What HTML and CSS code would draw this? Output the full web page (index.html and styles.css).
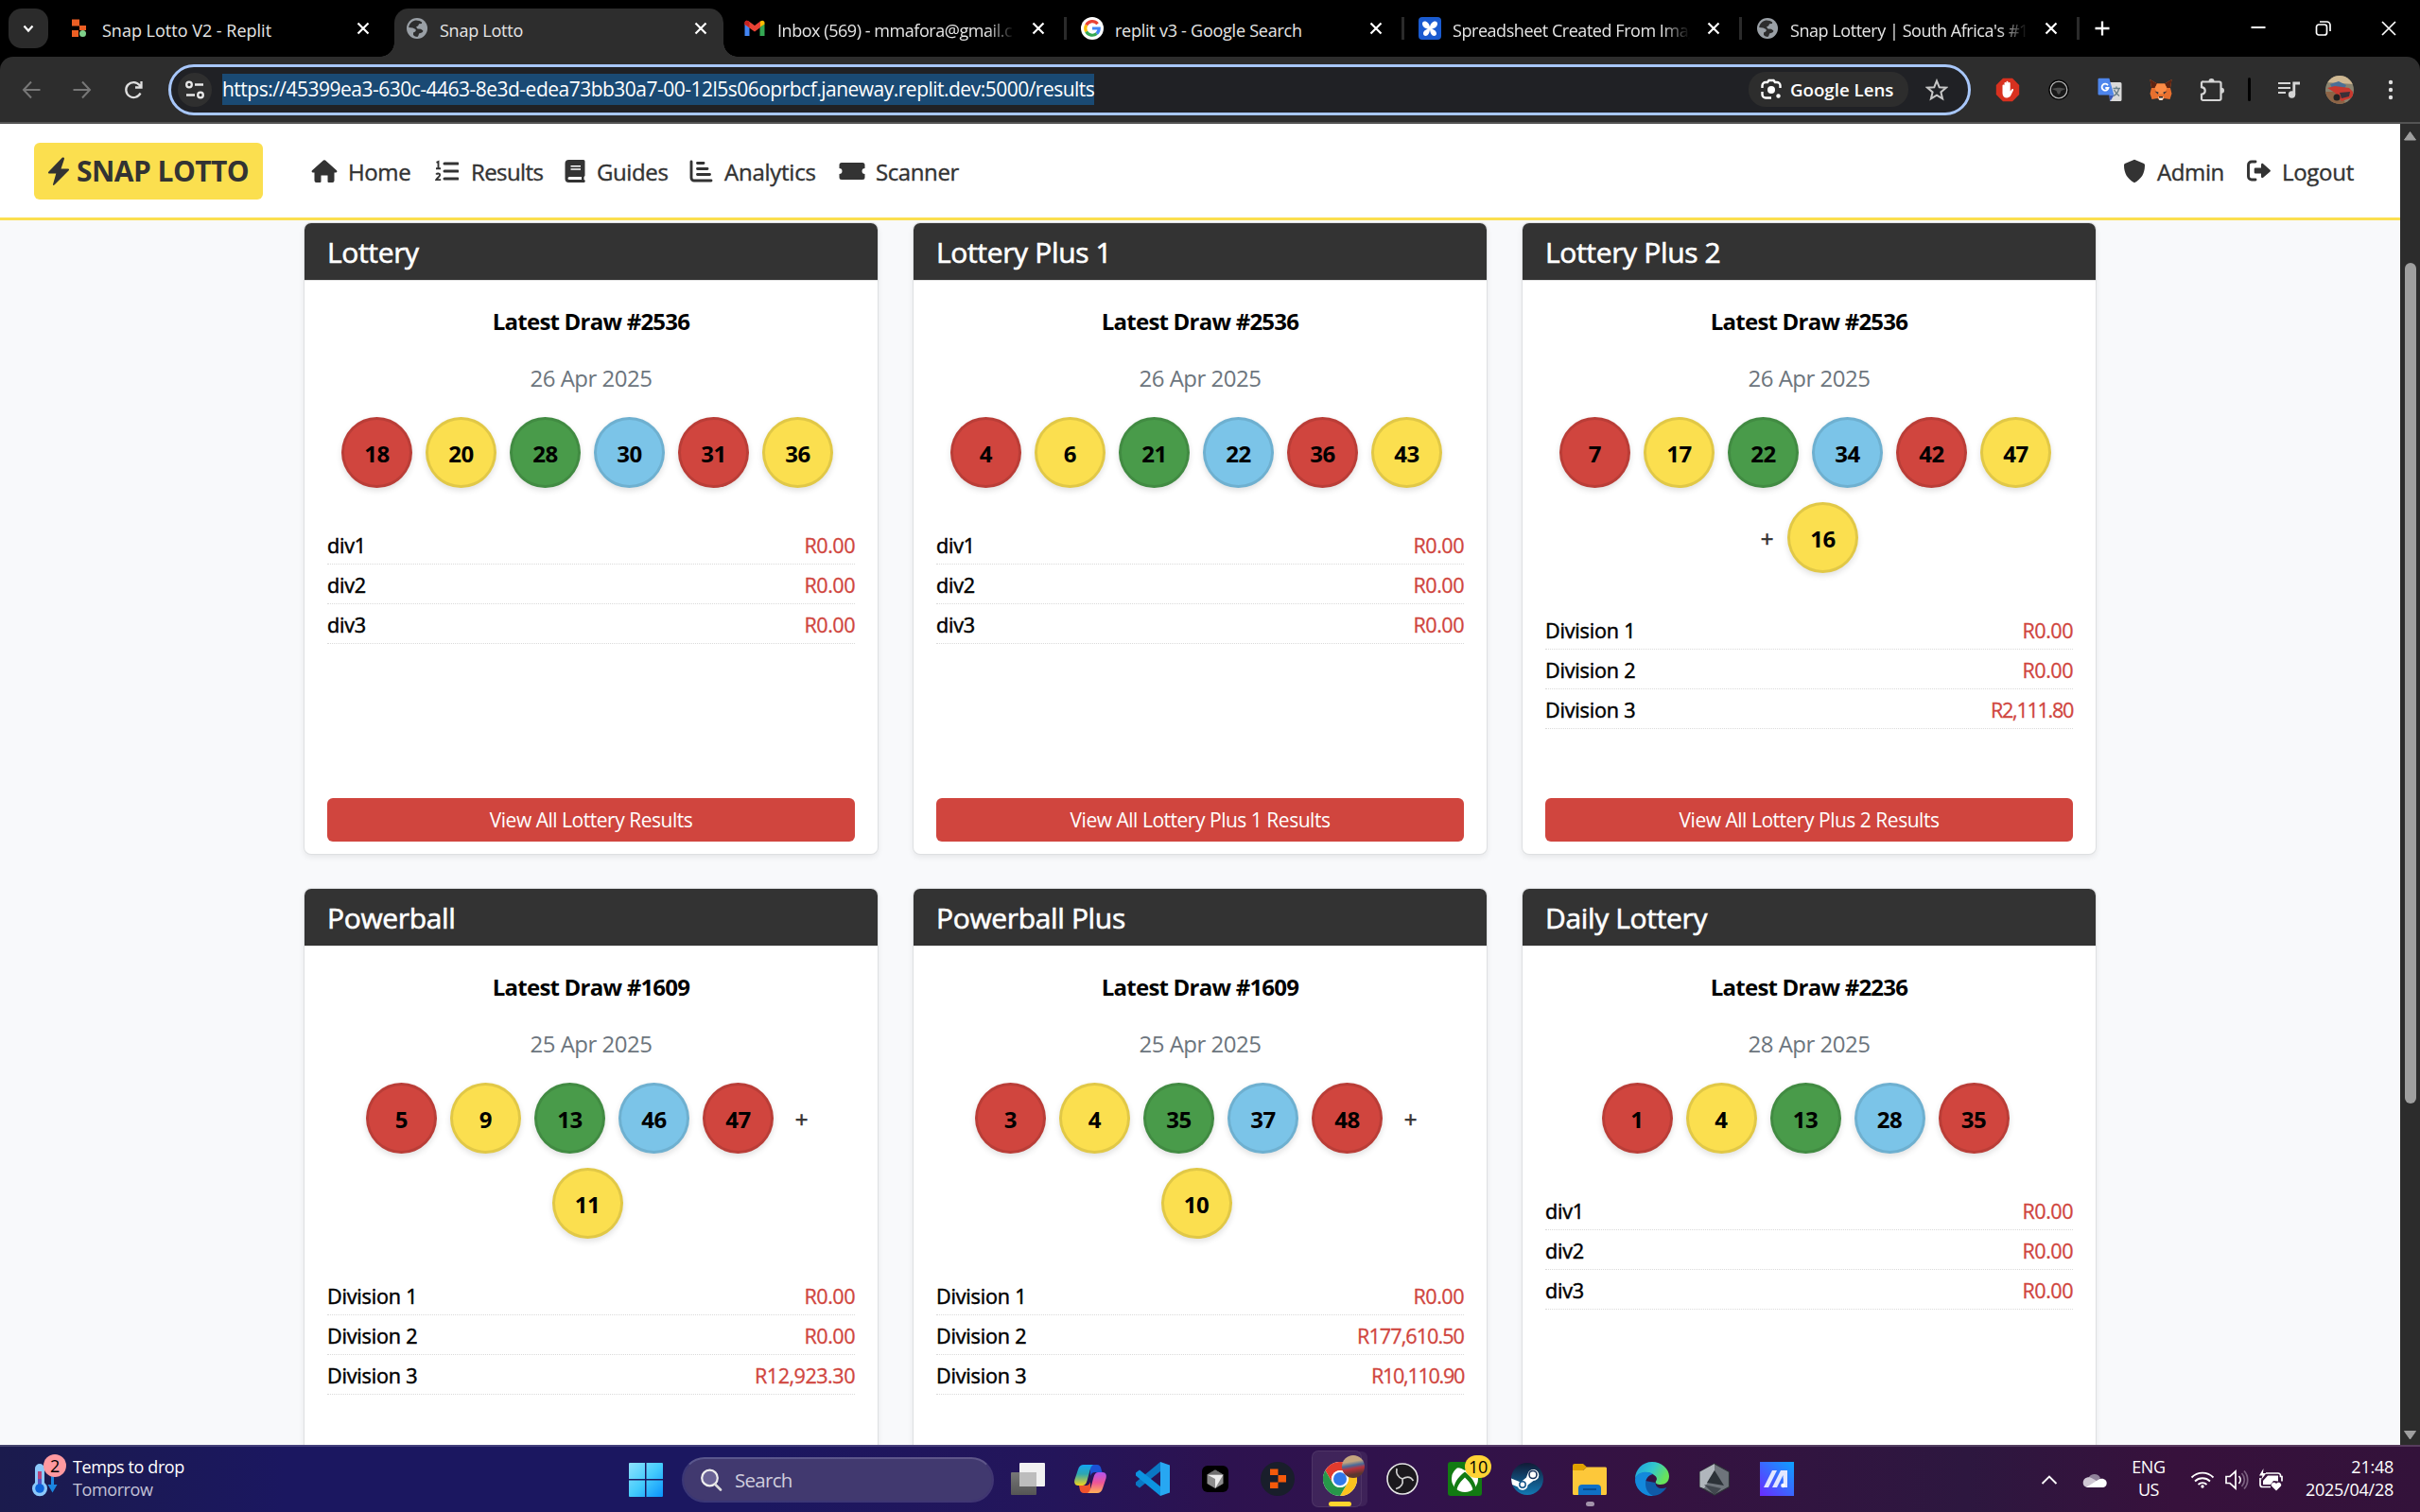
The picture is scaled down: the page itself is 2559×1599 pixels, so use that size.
FILE: index.html
```
<!DOCTYPE html>
<html lang="en">
<head>
<meta charset="utf-8">
<title>Snap Lotto</title>
<link rel="stylesheet" href="styles.css">
</head>
<body>
<svg class="defs" width="0" height="0">
  <defs>
    <symbol id="close" viewBox="0 0 16 16"><path d="M2.500 2.500l11 11M13.500 2.500l-11 11" stroke="#fff" stroke-width="2.200" fill="none"/></symbol>
    <symbol id="globe" viewBox="0 0 24 24"><circle cx="12" cy="12" r="11" fill="#9aa0a6"/><path d="M10 3.500c-3.500.8-6.500 4-6.800 7.500l4.300.5 3 1.500c.5 1 .2 2-.5 2.600l-2 .9v2.500c1 1.200 2.600 1.900 4.400 2 1-1 1.400-2.200 1.600-3.600l3-.9c1-.4 1.500-1.200 1.200-2.200l-2.200-1.600-3.500-.3-1.500-1.800 2.200-1.300.9-2 2.800-.3.3-1.500c-1.600-1.300-4.600-2.400-7.200-2z" fill="#2d2d2d"/></symbol>
  </defs>
</svg>

<header class="tabstrip">
  <button class="tab-search"><svg width="16" height="16" viewBox="0 0 16 16"><path d="M3.500 5.500L8 10.500l4.500-5" stroke="#fff" stroke-width="2.200" fill="none"/></svg></button>
  <div class="tab">
    <svg class="favicon" viewBox="0 0 24 24"><path d="M4 2.500h8v7H4zM12 9h7v5h-7zM4 14h7v7H4z" fill="#ec5f24"/><ellipse cx="15.500" cy="17.500" rx="3.500" ry="3.500" fill="#7fd08a"/></svg>
    <span class="tab-title">Snap Lotto V2 - Replit</span>
    <svg class="tab-close"><use href="#close"/></svg>
  </div>
  <div class="tab active">
    <svg class="favicon" viewBox="0 0 24 24"><use href="#globe"/></svg>
    <span class="tab-title">Snap Lotto</span>
    <svg class="tab-close"><use href="#close"/></svg>
  </div>
  <div class="tab">
    <svg class="favicon" viewBox="0 0 24 24"><path d="M1.500 20V7l5 4v9z" fill="#4285f4"/><path d="M22.500 20V7l-5 4v9z" fill="#34a853"/><path d="M17.500 11l5-3.500V6c0-2-2.200-3-4-1.800l-1 .8z" fill="#fbbc04"/><path d="M1.500 8V6c0-2 2.200-3 4-1.800L12 9l6-4.500V11L12 15.500z" fill="#ea4335"/><path d="M1.500 7.500V6c0-1.500 1.500-2.600 3-2l2 1.500V11z" fill="#c5221f"/></svg>
    <span class="tab-title fade">Inbox (569) - mmafora@gmail.c</span>
    <svg class="tab-close"><use href="#close"/></svg>
  </div>
  <div class="tab divided">
    <svg class="favicon" viewBox="0 0 24 24"><circle cx="12" cy="12" r="12" fill="#fff"/><g fill="none" stroke-width="3.200"><path d="M17.600 7.200A7.200 7.200 0 0 0 5.700 8.500" stroke="#ea4335"/><path d="M5.700 8.500a7.200 7.200 0 0 0 0 7" stroke="#fbbc05"/><path d="M5.700 15.500a7.200 7.200 0 0 0 11 2" stroke="#34a853"/><path d="M12 12h7.200c0 2.200-.9 4.200-2.500 5.500" stroke="#4285f4"/></g></svg>
    <span class="tab-title">replit v3 - Google Search</span>
    <svg class="tab-close"><use href="#close"/></svg>
  </div>
  <div class="tab divided">
    <svg class="favicon" viewBox="0 0 24 24"><rect width="24" height="24" rx="4" fill="#1a5bd0"/><path d="M12 10.500c-.6-3.500-3-6-5.500-6C5 4.500 4 5.500 4 7c0 3 3 5.500 6.500 5.500-3 .5-5.500 2.500-5.500 5 0 1.500 1 2.500 2.500 2.500 2.500 0 4.200-3 4.500-7 .3 4 2 7 4.500 7 1.500 0 2.500-1 2.500-2.500 0-2.500-2.500-4.500-5.500-5C17 12.500 20 10 20 7c0-1.500-1-2.500-2.500-2.500-2.500 0-4.900 2.500-5.500 6z" fill="#fff"/></svg>
    <span class="tab-title fade">Spreadsheet Created From Imag</span>
    <svg class="tab-close"><use href="#close"/></svg>
  </div>
  <div class="tab divided">
    <svg class="favicon" viewBox="0 0 24 24"><use href="#globe"/></svg>
    <span class="tab-title fade">Snap Lottery | South Africa's #1</span>
    <svg class="tab-close"><use href="#close"/></svg>
  </div>
  <div class="new-tab"><svg width="16" height="16" viewBox="0 0 16 16"><path d="M8 .5v15M.5 8h15" stroke="#fff" stroke-width="2.300"/></svg></div>
  <div class="window-controls">
    <svg viewBox="0 0 18 18"><path d="M1.500 8h15" stroke="#fff" stroke-width="2"/></svg>
    <svg viewBox="0 0 18 18"><rect x="1.500" y="5" width="11" height="11" rx="2.500" fill="none" stroke="#fff" stroke-width="1.700"/><path d="M5 2h7.500a3.500 3.500 0 0 1 3.500 3.500V12" fill="none" stroke="#fff" stroke-width="1.700"/></svg>
    <svg viewBox="0 0 18 18"><path d="M2 2l14 14M16 2L2 16" stroke="#fff" stroke-width="1.700"/></svg>
  </div>
</header>

<div class="toolbar-wrap">
<div class="toolbar">
  <svg class="nav-btn" viewBox="0 0 24 24"><path d="M12 3.500L4 12l8 8.500M4 12h17.500" stroke="#777" stroke-width="2" fill="none"/></svg>
  <svg class="nav-btn" viewBox="0 0 24 24"><path d="M12 3.500l8 8.500-8 8.500M20 12H2.500" stroke="#777" stroke-width="2" fill="none"/></svg>
  <svg class="nav-btn" viewBox="0 0 24 24"><path d="M19.500 15.500A8 8 0 1 1 18.500 7L20 9M20.500 3v6.500H14" stroke="#dedede" stroke-width="2.300" fill="none"/></svg>
  <div class="omnibox">
    <span class="site-info"><svg width="22" height="22" viewBox="0 0 22 22" fill="none" stroke="#e8e8e8" stroke-width="2.300"><circle cx="5" cy="5.500" r="2.800"/><path d="M11 5.500h9M2 16.500h9"/><circle cx="17" cy="16.500" r="2.800"/></svg></span>
    <span class="url">https://45399ea3-630c-4463-8e3d-edea73bb30a7-00-12l5s06oprbcf.janeway.replit.dev:5000/results</span>
    <span class="lens"><svg width="24" height="24" viewBox="0 0 24 24"><path d="M2.500 10V7.500A3.500 3.500 0 0 1 6 4h2l1.500-2h5L16 4h2a3.500 3.500 0 0 1 3.500 3.500V10M2.500 14v3A3.500 3.500 0 0 0 6 20.500h6" fill="none" stroke="#fff" stroke-width="2.400"/><circle cx="12" cy="12" r="4" fill="#fff"/><circle cx="19.500" cy="18.500" r="2.200" fill="#fff"/></svg><b>Google Lens</b></span>
    <svg class="star" viewBox="0 0 24 24"><path d="M12 2.500l2.700 6.700 7.200.5-5.500 4.700 1.700 7L12 17.600l-6.100 3.800 1.700-7L2.100 9.700l7.200-.5z" fill="none" stroke="#c7c7c7" stroke-width="2"/></svg>
  </div>
  <div class="extensions">
    <span class="ext"><svg width="26" height="26" viewBox="0 0 26 26"><path d="M8 .8h10L25.200 8v10L18 25.200H8L.8 18V8z" fill="#d8311f"/><path d="M7.500 13V8.500a1 1 0 0 1 2 0V6a1 1 0 0 1 2 0V4.800a1 1 0 0 1 2 0V6a1 1 0 0 1 2.200 0v8.500l1.600-2c.9-1 2.200-.2 1.700.9l-2.500 5.200c-.8 1.800-2 2.800-4.200 2.800-3 0-4.800-2-4.800-5z" fill="#fff"/></svg></span>
    <span class="ext"><svg width="22" height="22" viewBox="0 0 22 22"><circle cx="11" cy="11" r="10" fill="#181818" stroke="#000" stroke-width="1.500"/><circle cx="11" cy="11" r="8.800" fill="none" stroke="#b4b4b4" stroke-width="1.300"/><path d="M3.500 10l6-1.200h3l6 1.200-5 2-1.500 3.500h-2L8.500 12z" fill="#4a4a4a"/></svg></span>
    <span class="ext"><svg width="26" height="26" viewBox="0 0 26 26"><path d="M12 5h12a1.500 1.500 0 0 1 1.500 1.500v17A1.500 1.500 0 0 1 24 25H13z" fill="#dadada"/><path d="M12 18.500h5.500L13.500 25z" fill="#3857b8"/><path d="M1.800.8h10.600l5 17.700H1.800A1.300 1.300 0 0 1 .5 17.200V2.100A1.300 1.300 0 0 1 1.800.8z" fill="#4e86ec"/><path d="M11 8.200A3.500 3.500 0 1 0 11.500 11H8.300" fill="none" stroke="#fff" stroke-width="1.800"/><path d="M16.500 11.500h7.500M20 9.500v2M22.500 12c-.8 3.500-3 6-5.500 7.500M17.500 13c1.500 3 3.500 5 5.500 6.500" fill="none" stroke="#6b8088" stroke-width="1.400"/></svg></span>
    <span class="ext"><svg width="26" height="26" viewBox="0 0 26 26"><path d="M1.500 2L9 6.500h8L24.500 2 23 11l1.500 6-2 6-6-1-2 2h-3l-2-2-6 1-2-6L3 11z" fill="#e8702e"/><path d="M1.500 2L9 6.500 6.500 11 3 11zM24.500 2L17 6.500l2.500 4.500 3.500 0z" fill="#5d2413"/><path d="M9 6.500h8l2.500 5-3.500 6h-6l-3.500-6z" fill="#fb8b45"/><path d="M6.500 14.500l4 1-.5 2.200zM19.500 14.500l-4 1 .5 2.200z" fill="#2b2f38"/><path d="M10 20.500h6l-1.500 3.500h-3z" fill="#f3e3d6"/><path d="M11 20h4v1.500h-4z" fill="#2b2420"/></svg></span>
    <span class="ext"><svg width="28" height="28" viewBox="0 0 28 28"><path d="M5 5.500h17a1.500 1.500 0 0 1 1.500 1.500v16.500A1.500 1.500 0 0 1 22 25H4.500A1.500 1.500 0 0 1 3 23.500v-4.700c5-.8 5-6.800 0-7.600V7a1.500 1.500 0 0 1 2-1.500z" fill="none" stroke="#d5d5d5" stroke-width="2.200"/><path d="M10.500 5a3 3 0 0 1 6 0zM24 11.800a3 3 0 0 1 0 6z" fill="#d5d5d5"/></svg></span>
    <i class="ext-sep"></i>
    <span class="ext"><svg width="26" height="22" viewBox="0 0 26 22"><path d="M2 4h13M2 9h13M2 14h8" stroke="#d5d5d5" stroke-width="2"/><circle cx="16.500" cy="16" r="3.700" fill="#d5d5d5"/><path d="M18.800 16V4H25" fill="none" stroke="#d5d5d5" stroke-width="2.800"/></svg></span>
    <span class="ext"><svg width="30" height="30" viewBox="0 0 30 30"><defs><clipPath id="avc"><circle cx="15" cy="15" r="15"/></clipPath></defs><g clip-path="url(#avc)"><path d="M0 0h30v30H0z" fill="#8a8470"/><path d="M0 0h30v9L0 7z" fill="#cfb892"/><path d="M0 17h14l8 13H0z" fill="#8d6446"/><path d="M5 9l9-3 8 4-2 4-13-1z" fill="#4b6f96"/><path d="M2 13l8-2 15 2 4 4v6l-12 4-7-9z" fill="#c8392f"/><path d="M15 18l11-1-1 5-8 2z" fill="#3b3038"/><circle cx="12" cy="23" r="3.500" fill="#222"/></g></svg></span>
    <span class="ext"><svg width="6" height="22" viewBox="0 0 6 22" fill="#e0e0e0"><circle cx="3" cy="3" r="2.200"/><circle cx="3" cy="11" r="2.200"/><circle cx="3" cy="19" r="2.200"/></svg></span>
  </div>
</div>
</div>

<div class="viewport">
  <div class="page">
    <nav class="navbar">
      <a class="brand"><svg width="24" height="30" viewBox="0 0 24 30"><path d="M15.500 1L1.500 15.500c-1 1-.5 2 .8 2h7L6 29c-.3 1 .7 1.300 1.500.5l15-15c1-1 .5-2-.8-2h-7.200L18 2c.4-1.200-1.500-2-2.500-1z" fill="#333"/></svg><span>SNAP LOTTO</span></a>
      <a class="link home"><svg width="28" height="26" viewBox="0 0 28 26"><path d="M13 1.600a1.500 1.500 0 0 1 2 0L27 12.300c.8.8.4 2.200-.9 2.200H24.500V23a2 2 0 0 1-2 2h-4a1 1 0 0 1-1-1v-6.500h-7V24a1 1 0 0 1-1 1h-4a2 2 0 0 1-2-2v-8.500H1.900c-1.300 0-1.700-1.400-.9-2.200z" fill="#333"/></svg><span>Home</span></a>
      <a class="link results"><svg width="25" height="24" viewBox="0 0 25 24" fill="none" stroke="#333"><path d="M10 4h14M10 12h14M10 20h14" stroke-width="3" stroke-linecap="round"/><path d="M1.500 2.800L3.500 2v7M1 9.200h5M1.200 15.500c1-1.500 4-1.500 4 .6 0 1.800-3 3-4 5h5" stroke-width="1.900"/></svg><span>Results</span></a>
      <a class="link guides"><svg width="22" height="26" viewBox="0 0 22 26"><path d="M4.500 1H20a1.500 1.500 0 0 1 1.500 1.500v15c0 .6-.5 1.200-1 1.400V22a1.500 1.500 0 0 1-.5 3H4.500A4 4 0 0 1 .5 21V5a4 4 0 0 1 4-4z" fill="#333"/><path d="M5 19h13v3H5a1.500 1.500 0 0 1 0-3zM6.500 7h10.500v1.600H6.500zM6.500 10.200h10.500v1.600H6.500z" fill="#fff"/></svg><span>Guides</span></a>
      <a class="link analytics"><svg width="25" height="24" viewBox="0 0 25 24" fill="none" stroke="#333" stroke-width="2.900" stroke-linecap="round"><path d="M2 2v17a3 3 0 0 0 3 3h18M8.500 3.500H15M8.500 9.500h10.500M8.500 15.500h13"/></svg><span>Analytics</span></a>
      <a class="link scanner"><svg width="28" height="20" viewBox="0 0 28 20"><path d="M3 1h22a2.500 2.500 0 0 1 2.500 2.500V7a3 3 0 0 0 0 6v3.500A2.500 2.500 0 0 1 25 19H3a2.500 2.500 0 0 1-2.500-2.500V13a3 3 0 0 0 0-6V3.500A2.500 2.500 0 0 1 3 1z" fill="#333"/></svg><span>Scanner</span></a>
      <a class="link admin"><svg width="24" height="26" viewBox="0 0 24 26"><path d="M12 .8l9.500 4c.9.400 1.500 1 1.500 2C23 15 19.500 21.500 12 25.200 4.500 21.500 1 15 1 6.800c0-1 .6-1.600 1.500-2z" fill="#333"/></svg><span>Admin</span></a>
      <a class="link logout"><svg width="26" height="24" viewBox="0 0 26 24"><path d="M9 2H5a3.500 3.500 0 0 0-3.500 3.500v12A3.500 3.500 0 0 0 5 21h4" fill="none" stroke="#333" stroke-width="2.900" stroke-linecap="round"/><path d="M9 8.500h6V5.300c0-1.300 1.200-1.900 2.200-1l7.300 6.400c.6.500.6 1.200 0 1.700l-7.300 6.400c-1 .9-2.200.3-2.200-1v-3.200H9a1.300 1.300 0 0 1-1.300-1.300V9.800A1.300 1.300 0 0 1 9 8.500z" fill="#333"/></svg><span>Logout</span></a>
    </nav>

    <main class="cards">
      <section class="card">
        <h5 class="card-header">Lottery</h5>
        <div class="card-body">
          <h6 class="draw">Latest Draw #2536</h6>
          <p class="date">26 Apr 2025</p>
          <div class="balls"><b class="ball red">18</b><b class="ball yellow">20</b><b class="ball green">28</b><b class="ball blue">30</b><b class="ball red">31</b><b class="ball yellow">36</b></div>
          <div class="division"><span>div1</span><em>R0.00</em></div>
          <div class="division"><span>div2</span><em>R0.00</em></div>
          <div class="division"><span>div3</span><em>R0.00</em></div>
          <a class="view-all">View All Lottery Results</a>
        </div>
      </section>
      <section class="card">
        <h5 class="card-header">Lottery Plus 1</h5>
        <div class="card-body">
          <h6 class="draw">Latest Draw #2536</h6>
          <p class="date">26 Apr 2025</p>
          <div class="balls"><b class="ball red">4</b><b class="ball yellow">6</b><b class="ball green">21</b><b class="ball blue">22</b><b class="ball red">36</b><b class="ball yellow">43</b></div>
          <div class="division"><span>div1</span><em>R0.00</em></div>
          <div class="division"><span>div2</span><em>R0.00</em></div>
          <div class="division"><span>div3</span><em>R0.00</em></div>
          <a class="view-all">View All Lottery Plus 1 Results</a>
        </div>
      </section>
      <section class="card">
        <h5 class="card-header">Lottery Plus 2</h5>
        <div class="card-body">
          <h6 class="draw">Latest Draw #2536</h6>
          <p class="date">26 Apr 2025</p>
          <div class="balls"><b class="ball red">7</b><b class="ball yellow">17</b><b class="ball green">22</b><b class="ball blue">34</b><b class="ball red">42</b><b class="ball yellow">47</b><span class="plus">+</span><b class="ball yellow">16</b></div>
          <div class="division"><span>Division 1</span><em>R0.00</em></div>
          <div class="division"><span>Division 2</span><em>R0.00</em></div>
          <div class="division"><span>Division 3</span><em class="tight">R2,111.80</em></div>
          <a class="view-all">View All Lottery Plus 2 Results</a>
        </div>
      </section>
      <section class="card">
        <h5 class="card-header">Powerball</h5>
        <div class="card-body">
          <h6 class="draw">Latest Draw #1609</h6>
          <p class="date">25 Apr 2025</p>
          <div class="balls"><b class="ball red">5</b><b class="ball yellow">9</b><b class="ball green">13</b><b class="ball blue">46</b><b class="ball red">47</b><span class="plus">+</span><b class="ball yellow">11</b></div>
          <div class="division"><span>Division 1</span><em>R0.00</em></div>
          <div class="division"><span>Division 2</span><em>R0.00</em></div>
          <div class="division"><span>Division 3</span><em>R12,923.30</em></div>
        </div>
      </section>
      <section class="card">
        <h5 class="card-header">Powerball Plus</h5>
        <div class="card-body">
          <h6 class="draw">Latest Draw #1609</h6>
          <p class="date">25 Apr 2025</p>
          <div class="balls"><b class="ball red">3</b><b class="ball yellow">4</b><b class="ball green">35</b><b class="ball blue">37</b><b class="ball red">48</b><span class="plus">+</span><b class="ball yellow">10</b></div>
          <div class="division"><span>Division 1</span><em>R0.00</em></div>
          <div class="division"><span>Division 2</span><em class="snug">R177,610.50</em></div>
          <div class="division"><span>Division 3</span><em class="tight">R10,110.90</em></div>
        </div>
      </section>
      <section class="card">
        <h5 class="card-header">Daily Lottery</h5>
        <div class="card-body">
          <h6 class="draw">Latest Draw #2236</h6>
          <p class="date">28 Apr 2025</p>
          <div class="balls"><b class="ball red">1</b><b class="ball yellow">4</b><b class="ball green">13</b><b class="ball blue">28</b><b class="ball red">35</b></div>
          <div class="division"><span>div1</span><em>R0.00</em></div>
          <div class="division"><span>div2</span><em>R0.00</em></div>
          <div class="division"><span>div3</span><em>R0.00</em></div>
        </div>
      </section>
    </main>
  </div>
  <div class="scrollbar">
    <svg width="15" height="11" viewBox="0 0 15 11"><path d="M7.500 1.500l6 8.500h-12z" fill="#9f9f9f" stroke="#9f9f9f" stroke-linejoin="round"/></svg>
    <i class="thumb"></i>
    <svg width="15" height="11" viewBox="0 0 15 11"><path d="M7.500 10l6-8.500h-12z" fill="#9f9f9f" stroke="#9f9f9f" stroke-linejoin="round"/></svg>
  </div>
</div>

<footer class="taskbar">
  <div class="weather">
    <div class="weather-icon">
      <svg width="28" height="36" viewBox="0 0 28 36"><path d="M4 6a5 5 0 0 1 10 0v15a8 8 0 1 1-10 0z" fill="#8cc8fa"/><path d="M7 9h4v14H7z" fill="#b8437c"/><path d="M7 17h4v8H7z" fill="#5a52c0"/><circle cx="9" cy="27" r="4.800" fill="#0d63d8"/><path d="M21 12h3v11h3.500l-5 8.500-5-8.500H21z" fill="#1b86e0"/></svg>
      <span class="badge">2</span>
    </div>
    <div class="weather-text"><span>Temps to drop</span><small>Tomorrow</small></div>
  </div>
  <svg class="start" viewBox="0 0 36 36"><defs><linearGradient id="win" x1="0" y1="0" x2="1" y2="1"><stop offset="0" stop-color="#8fe2fd"/><stop offset=".5" stop-color="#45ccfc"/><stop offset="1" stop-color="#0a93fc"/></linearGradient></defs><path d="M1 0h16v17H0V1a1 1 0 0 1 1-1zM18.500 0H35a1 1 0 0 1 1 1v16H18.500zM0 18.500h17V36H1a1 1 0 0 1-1-1zM18.500 18.500H36V35a1 1 0 0 1-1 1H18.500z" fill="url(#win)"/></svg>
  <div class="search"><svg width="24" height="24" viewBox="0 0 24 24"><circle cx="10.500" cy="10" r="8.300" fill="#6a6396" stroke="#eee" stroke-width="2.200"/><path d="M16 16.500l6 6" stroke="#ddd" stroke-width="2.600" stroke-linecap="round"/></svg><span>Search</span></div>
  <div class="apps">
    <span class="app"><svg viewBox="0 0 36 36"><defs><linearGradient id="tv" x1="0" y1="0" x2="0" y2="1"><stop offset="0" stop-color="#777"/><stop offset="1" stop-color="#555"/></linearGradient></defs><rect x="0" y="11" width="27" height="24" rx="1" fill="url(#tv)"/><rect x="9" y="1" width="27" height="25" rx="1" fill="#f1f1f1"/><path d="M9 11h18v15H9z" fill="#bdbdbd"/></svg></span>
    <span class="app"><svg viewBox="0 0 36 36"><defs><linearGradient id="cp1" x1="0" y1="0" x2="0" y2="1"><stop offset="0" stop-color="#12a5f4"/><stop offset=".45" stop-color="#2ea6b0"/><stop offset="1" stop-color="#f3d51b"/></linearGradient><linearGradient id="cp2" x1="0" y1="0" x2="0" y2="1"><stop offset="0" stop-color="#b254f0"/><stop offset=".5" stop-color="#ef5597"/><stop offset="1" stop-color="#ffb257"/></linearGradient></defs><path d="M18 3h7c2.500 0 3.500 1.500 4 3l1.500 5H23c-3 0-4 1.500-5 4z" fill="#1a52d6"/><path d="M18 33h-7c-2.500 0-3.500-1.500-4-3l-1-5h7c3 0 4-1.500 5-4z" fill="#f0532d"/><path d="M11 3h10c-2 1-2.700 3-3.500 6l-3 11c-1 3.500-2.500 5-5 5H5c-3.500 0-4.500-3-3.500-6.500L5 8c1-3.300 3-5 6-5z" fill="url(#cp1)"/><path d="M25 33H15c2-1 2.700-3 3.500-6l3-11c1-3.500 2.500-5 5-5H31c3.500 0 4.500 3 3.500 6.500L31 28c-1 3.300-3 5-6 5z" fill="url(#cp2)"/></svg></span>
    <span class="app"><svg viewBox="0 0 36 36"><path d="M26 0l10 3.500v29L26 36z" fill="#27a7f2"/><path d="M26 0v10L4 27.500 0 24.500v-3z" fill="#0a77c4"/><path d="M26 36V26L4 8.500 0 11.500v3z" fill="#0c93e0"/></svg></span>
    <span class="app"><svg viewBox="0 0 36 36"><rect x="4" y="4" width="28" height="28" rx="6" fill="#000"/><path d="M18 8.500l8.500 5V23L18 28l-8.500-5v-9.500z" fill="#8d8d8d"/><path d="M9.500 13.500h17L18 28v-10z" fill="#ececec"/><path d="M18 8.500l8.500 5h-17z" fill="#6e6e6e"/></svg></span>
    <span class="app"><svg viewBox="0 0 36 36"><circle cx="18" cy="18" r="18" fill="#191e2b"/><path d="M10 7.500h8.500V14H10zM18.500 14h8.500v7.500h-8.500zM10 21.500h8.500V28H10z" fill="#f65a0b"/></svg></span>
    <span class="app chrome"><svg viewBox="0 0 36 36"><circle cx="18" cy="18" r="18" fill="#fff"/><path d="M18 9h15.600A18 18 0 0 0 2.400 9l7.800 13.500A9 9 0 0 1 18 9z" fill="#e33b2e"/><path d="M33.600 9H18a9 9 0 0 1 7.800 13.500L18 36A18 18 0 0 0 33.600 9z" fill="#fcc31e"/><path d="M2.400 9A18 18 0 0 0 18 36l7.800-13.500a9 9 0 0 1-15.600 0z" fill="#27974a"/><circle cx="18" cy="18" r="8.800" fill="#fff"/><circle cx="18" cy="18" r="7" fill="#3079ea"/></svg><i class="profile"></i><i class="running wide"></i></span>
    <span class="app"><svg viewBox="0 0 36 36"><circle cx="18" cy="18" r="16" fill="#1b191d" stroke="#e6e6e6" stroke-width="1.600"/><path d="M12 7c-1 5 1 9 6 11M18 18c5-3 9-2 11.500 2M18 18c1 5-1 9-7 10.500" fill="none" stroke="#cfcfcf" stroke-width="1.700"/></svg></span>
    <span class="app"><svg viewBox="0 0 36 36"><rect width="36" height="36" rx="3" fill="#127b12"/><circle cx="18" cy="18" r="14" fill="#fff"/><path d="M18 10.500C23 14 29 21 29.500 27l-3 3C26 25 22 20 18 16.500 14 20 10 25 9.500 30l-3-3C7 21 13 14 18 10.500zM9 6.500c3-.8 6 .7 9 2.500 3-1.800 6-3.300 9-2.500L24 3H12z" fill="#127b12"/></svg><span class="badge count">10</span></span>
    <span class="app"><svg viewBox="0 0 36 36"><defs><linearGradient id="stm" x1="0" y1="0" x2="0" y2="1"><stop offset="0" stop-color="#111a35"/><stop offset="1" stop-color="#1279b4"/></linearGradient></defs><circle cx="18" cy="18" r="17" fill="url(#stm)"/><path d="M1 17.500l10 4 6-5 1.500-4a6 6 0 1 1 6 7.500l-6 4.500a5.500 5.500 0 0 1-10.500 2L2 24z" fill="#fff"/><circle cx="24" cy="13.500" r="4" fill="#fff" stroke="#14305a" stroke-width="1.600"/><circle cx="13" cy="24" r="3.200" fill="#fff" stroke="#14558a" stroke-width="1.500"/></svg></span>
    <span class="app"><svg viewBox="0 0 36 36"><path d="M0 4a2 2 0 0 1 2-2h9l4 3.500L11 9H0z" fill="#e0a100"/><path d="M0 9h11l4-3.500h19A1.500 1.500 0 0 1 36 7v26.500a1.500 1.500 0 0 1-1.500 1.500H1.500A1.500 1.500 0 0 1 0 33.500z" fill="#fdc83a"/><path d="M6 35V28a4 4 0 0 1 4-4h16a4 4 0 0 1 4 4v7z" fill="#0f70c6"/><path d="M11 29h14" stroke="#07498b" stroke-width="1.700"/></svg><i class="running"></i></span>
    <span class="app"><svg viewBox="0 0 36 36"><defs><linearGradient id="edg" x1="0" y1="0" x2="1" y2=".4"><stop offset="0" stop-color="#1b9de2"/><stop offset=".55" stop-color="#33c8cc"/><stop offset="1" stop-color="#68e25a"/></linearGradient></defs><path d="M0 18a18 18 0 0 0 18 18c7 0 12-4 15.500-9-6 2.500-12 .5-12-5z" fill="#0f5ba8"/><path d="M0 18C0 8 8 0 18 0s18 7.500 18 15c0 6-4 9-9 9-4 0-6-1.500-5-3.500 1-1.500 1.500-3 0-5C17 10 4 9 0 18z" fill="url(#edg)"/><path d="M0 18c2-8 14-9 19-5-5 1-8 5-8 10 0 6 3 11 8 13C8 36.500 0 28 0 18z" fill="#1389dc"/></svg></span>
    <span class="app"><svg viewBox="0 0 36 36"><path d="M18 2l15.500 8.500v16L18 35 2.500 26.500v-16z" fill="#6e747b" stroke="#2c3036" stroke-width="1.200"/><path d="M18 2v7L7 28l-4.500-1.500v-16z" fill="#b0b6bc"/><path d="M18 9l10 16-18-3z" fill="#2c3238"/><path d="M7 24l18 4-7 7z" fill="#41474e"/></svg></span>
    <span class="app"><svg viewBox="0 0 36 36"><defs><linearGradient id="ma" x1="0" y1="1" x2="1" y2="0"><stop offset="0" stop-color="#6a2bff"/><stop offset="1" stop-color="#0ca2ff"/></linearGradient></defs><path d="M0 0h36v36H0z" fill="url(#ma)"/><path d="M4 27L13 9h5L9 27zM13 27l9-18h5l-9 18zM24.500 9H29v18h-4.500z" fill="#e3e7ff"/><path d="M24.500 17l-3 6h3z" fill="#2f6bff"/><circle cx="24.500" cy="25" r="2.300" fill="#fff"/></svg></span>
  </div>
  <div class="tray">
    <svg class="chev" width="18" height="12" viewBox="0 0 18 12"><path d="M1.500 10L9 2.500l7.500 7.500" fill="none" stroke="#fff" stroke-width="1.900"/></svg>
    <svg class="cloud" width="26" height="18" viewBox="0 0 26 18"><path d="M6 8a7 7 0 0 1 13-1l-6 5z" fill="#8f8299"/><path d="M5 6.500c4-1 6 1.500 14 6L5 17C-1 16.500-.5 7.500 5 6.500z" fill="#cfc7d3"/><path d="M4 17l14-9c10-2 9 9 4 9z" fill="#fff"/></svg>
    <div class="lang"><span>ENG</span><span>US</span></div>
    <svg class="wifi" width="26" height="20" viewBox="0 0 26 20" fill="none" stroke="#fff" stroke-width="1.800"><path d="M1.500 7.500a16 16 0 0 1 23 0M5 11.500a11.500 11.500 0 0 1 16 0M8.500 15a6.500 6.500 0 0 1 9 0"/><circle cx="13" cy="17" r="1.700" fill="#fff" stroke="none"/></svg>
    <svg class="vol" width="26" height="22" viewBox="0 0 26 22" fill="none" stroke-width="1.700"><path d="M2 7.500h4l6-5.500v18l-6-5.500H2z" stroke="#fff"/><path d="M15.500 7a6 6 0 0 1 0 8" stroke="#fff"/><path d="M18.500 4a10 10 0 0 1 0 14M21 1.500a14 14 0 0 1 0 19" stroke="#7b6180"/></svg>
    <svg class="batt" width="26" height="24" viewBox="0 0 26 24"><path d="M8 5h13a2.500 2.500 0 0 1 2.500 2.500v1h1.500v5M2 10v7a2.500 2.500 0 0 0 2.500 2.500H13" fill="none" stroke="#fff" stroke-width="1.700"/><path d="M10 7.500h11v6l-5-.5-3 4H5v-4z" fill="#fff"/><path d="M5.500 0L1 7.500h3.500L3 12l5.500-7H5z" fill="#fff"/><path d="M19 23.500l-5-5c-1.500-3 3-5.500 5-2.500 2-3 6.500-.5 5 2.500z" fill="#fff"/></svg>
    <div class="clock"><span>21:48</span><span>2025/04/28</span></div>
  </div>
</footer>
</body>
</html>
```
FILE: styles.css
```
* { box-sizing: border-box; }
body {
  margin: 0;
  width: 2559px;
  height: 1599px;
  overflow: hidden;
  display: flex;
  flex-direction: column;
  background: #000;
  font-family: "Open Sans", "Noto Sans", sans-serif;
  font-size: 24px;
  color: #000;
  white-space: nowrap;
}
svg { display: block; flex: none; }
.defs { position: absolute; }

/* Tab strip */
.tabstrip { flex: none; height: 60px; display: flex; padding-left: 9px; background: #000; }
.tab-search { width: 42px; height: 42px; margin: 9px 4px 0 0; padding: 0; border: 0; border-radius: 14px; background: #2b2b2b; display: flex; align-items: center; justify-content: center; }
.tab { position: relative; width: 357px; height: 60px; padding: 0 0 0 17px; display: flex; align-items: center; color: #e6e6e6; font-size: 18px; letter-spacing: -.25px; flex: none; }
.tab:nth-child(2) { letter-spacing: 0; }
.tab > * { position: relative; }
.favicon { width: 24px; height: 24px; }
.tab-title { width: 251px; margin: 0 17px 0 12px; padding-top: 3px; }
.tab-title.fade { letter-spacing: -.45px; -webkit-mask-image: linear-gradient(90deg, #000 88%, transparent 100%); mask-image: linear-gradient(90deg, #000 88%, transparent 100%); }
.tab-close { width: 16px; height: 16px; }
.tab.active::before { content: ""; position: absolute; left: 5px; right: 4px; top: 9px; bottom: 0; border-radius: 15px 15px 0 0; background: #2d2d2d; }
.tab.active::after { content: ""; position: absolute; left: -10px; right: -11px; bottom: 0; height: 15px; background: radial-gradient(circle at 0 0, transparent 14.500px, #2d2d2d 15px) 0 0 / 15px 15px no-repeat, radial-gradient(circle at 100% 0, transparent 14.500px, #2d2d2d 15px) 100% 0 / 15px 15px no-repeat; }
.tab.divided::before { content: ""; position: absolute; left: -1px; top: 18px; width: 3px; height: 24px; background: #2b2b2b; }
.new-tab { width: 52px; display: flex; align-items: center; justify-content: center; position: relative; }
.new-tab::before { content: ""; position: absolute; left: -1px; top: 18px; width: 3px; height: 24px; background: #2b2b2b; }
.window-controls { margin-left: auto; display: flex; align-items: center; gap: 51px; padding-right: 24px; }
.window-controls svg { width: 18px; height: 18px; }

/* Toolbar */
.toolbar-wrap { flex: none; height: 71px; background: #000; }
.toolbar { height: 71px; display: flex; align-items: center; padding: 0 0 0 21px; background: #2d2d2d; border-bottom: 2px solid #545454; border-radius: 14px 14px 0 0; }
.nav-btn { width: 24px; height: 24px; margin-right: 30px; }
.nav-btn:nth-child(3) { margin-right: 25px; }
.omnibox { width: 1906px; height: 54px; flex: none; display: flex; align-items: center; padding: 0 21px 0 7px; border: 3px solid #a8c7fa; border-radius: 27px; background: #202125; }
.site-info { width: 36px; height: 36px; border-radius: 50%; background: #2f2f2f; display: flex; align-items: center; justify-content: center; margin-right: 11px; }
.url { height: 33px; line-height: 33px; font-size: 21px; letter-spacing: -.51px; color: #fff; background: #1a4a74; }
.lens { width: 169px; height: 37px; margin-left: auto; margin-right: 18px; padding-left: 12px; border-radius: 18px; background: #2d2d2d; display: flex; align-items: center; gap: 8px; color: #fff; font-size: 18.700px; }
.lens b { font-weight: 600; }
.star { width: 24px; height: 24px; }
.extensions { display: flex; align-items: center; margin-left: 12px; }
.ext { width: 54px; display: flex; justify-content: center; }
.ext-sep { width: 3px; height: 25px; margin: 0 13px 0 11px; background: #000; border-radius: 2px; }

/* Page */
.viewport { flex: none; height: 1397px; display: flex; overflow: hidden; }
.page { width: 2538px; background: #f8f9fb; }
.navbar { height: 102px; display: flex; align-items: center; padding: 0 0 2px 36px; background: #fff; border-bottom: 3px solid #fbdf4f; color: #333; }
.brand { width: 242px; height: 60px; margin: 2px 51px 0 0; padding-left: 14px; display: flex; align-items: center; gap: 7px; border-radius: 6px; background: #fbdf4f; font-size: 30px; font-weight: 700; letter-spacing: -.55px; }
.link { display: flex; align-items: center; justify-content: space-between; letter-spacing: -.4px; -webkit-text-stroke: .4px currentColor; }
.link svg { margin-top: 2px; }
.link span { margin-top: 3px; }
.home span { width: 92px; }
.home { width: 131px; }
.results { width: 137px; letter-spacing: -.6px; }
.results span { width: 99px; }
.guides { width: 132px; }
.guides span { width: 98px; }
.analytics { width: 158px; letter-spacing: -.25px; }
.analytics span { width: 121px; }
.scanner { width: 130px; }
.scanner span { width: 91px; }
.admin { width: 131px; margin-left: auto; }
.admin span { width: 95px; }
.logout { width: 162px; letter-spacing: -.3px; }
.logout span { width: 125px; }

.cards { display: grid; grid-template-columns: repeat(3, 606px); grid-auto-rows: 667px; gap: 37px 38px; padding: 3px 0 0 322px; }
.card { display: flex; flex-direction: column; border-radius: 7px; background: #fff; box-shadow: 0 0 0 1px #dee0e2, 0 3px 7px rgba(0, 0, 0, .09); overflow: hidden; }
.card-header { margin: 0; height: 60px; line-height: 61px; padding-left: 24px; background: #333; color: #fff; font-size: 30px; font-weight: 400; letter-spacing: -.35px; -webkit-text-stroke: .6px currentColor; }
.card-body { flex: 1; display: flex; flex-direction: column; padding: 25px 24px 13px; border-top: 1px solid #e4e4e4; }
.draw { margin: 0; height: 36px; line-height: 36px; text-align: center; font-size: 24px; font-weight: 700; letter-spacing: -.78px; }
.date { margin: 24px 0 23px; height: 36px; line-height: 36px; text-align: center; color: #6c757d; letter-spacing: -.5px; }
.balls { display: flex; flex-wrap: wrap; justify-content: center; padding-right: 8px; margin-bottom: 23.500px; }
.ball { width: 75px; height: 75px; margin: 0 7px 15px; line-height: 71px; border: 3px solid rgba(0, 0, 0, .1); border-radius: 50%; text-align: center; font-size: 24px; font-weight: 700; letter-spacing: -.4px; box-shadow: 0 3px 6px rgba(0, 0, 0, .12); }
.red { background-color: #d0453e; }
.yellow { background-color: #fbdf4f; }
.green { background-color: #499b4a; }
.blue { background-color: #7bc4e8; }
.plus { width: 37px; padding-left: 8px; line-height: 77px; text-align: center; color: #333; -webkit-text-stroke: .6px currentColor; }
.division { height: 42.300px; line-height: 43px; display: flex; justify-content: space-between; border-bottom: 1px dotted #dadada; font-size: 21.600px; letter-spacing: -.2px; }
.division span { -webkit-text-stroke: .5px currentColor; }
.division em { font-style: normal; color: #d0453e; letter-spacing: -.4px; -webkit-text-stroke: .3px currentColor; }
.division em:not([class]) { letter-spacing: -.5px; }
.division .snug { letter-spacing: -.95px; }
.division .tight { letter-spacing: -1.300px; }
.view-all { height: 46px; line-height: 46px; margin-top: auto; border-radius: 6px; background: #d0453e; color: #fff; text-align: center; font-size: 21px; letter-spacing: -.48px; }

.scrollbar { width: 21px; background: #2c2c2c; display: flex; flex-direction: column; align-items: center; padding: 7px 0 5px; }
.thumb { width: 12px; height: 889px; margin: 129px 0 auto; border-radius: 6px; background: #9f9f9f; }

/* Taskbar */
.taskbar { flex: none; height: 71px; display: flex; align-items: center; border-top: 2px solid rgba(255, 255, 255, .18); background: linear-gradient(90deg, #1b1b4d 0, #1b1760 300px, #1b1760 800px, #24155a 1120px, #2d124f 1300px, #31124b 1500px, #351241 1750px, #2d173f 2080px, #37113c 2300px, #33123a 2559px) border-box; color: #fff; font-size: 18px; letter-spacing: -.4px; }
.weather { width: 632px; margin-left: 33px; display: flex; align-items: center; }
.weather-icon { position: relative; width: 44px; height: 36px; }
.badge { position: absolute; left: 13px; top: -9px; width: 24px; height: 24px; line-height: 24px; border-radius: 12px; background: #ff99a0; color: #000; text-align: center; font-size: 18px; }
.weather-text { display: flex; flex-direction: column; line-height: 24px; margin-top: -3px; }
.weather-text small { font-size: 18px; color: #c2c1d6; }
.start { width: 36px; height: 36px; }
.search { width: 330px; height: 48px; margin: 0 3px 0 20px; padding-left: 17px; display: flex; align-items: center; gap: 13px; border: 2px solid rgba(255, 255, 255, .14); border-top-color: rgba(255, 255, 255, .28); border-radius: 24px; background: #41396f; background-clip: padding-box; font-size: 20.500px; letter-spacing: -.7px; color: #cfcddd; }
.apps { display: flex; height: 100%; align-items: center; }
.app { position: relative; width: 66px; height: 100%; display: flex; align-items: center; justify-content: center; }
.app svg { position: relative; top: -1px; width: 36px; height: 36px; }
.chrome::before { content: ""; position: absolute; left: 3px; top: 4px; width: 53px; height: 60px; border-radius: 7px; background: rgba(255, 255, 255, .08); box-shadow: inset 0 0 0 1px rgba(255, 255, 255, .08), 7px 0 0 -1px rgba(255, 255, 255, .07); }
.profile { position: absolute; left: 35px; top: 9px; width: 24px; height: 24px; border-radius: 50%; background: linear-gradient(170deg, #c4a57e 30%, #4a6a98 45%, #b8323c 58%, #5b3630 80%); }
.running { position: absolute; left: 29px; top: 58px; width: 9px; height: 5px; border-radius: 3px; background: #a393ab; }
.running.wide { left: 21px; width: 24px; background: #ffd52e; }
.badge.count { left: 33px; top: 9px; width: 28px; background: #ffd335; }
.tray { flex: 1; display: flex; align-items: center; padding: 0 28px 0 246px; }
.cloud { margin: 1px 0 0 26px; }
.lang { width: 42px; margin: -3px 22px 0 23px; display: flex; flex-direction: column; align-items: center; line-height: 24px; }
.wifi { margin-left: 1px; }
.vol, .batt { margin-left: 10px; }
.clock { margin: -3px 0 0 auto; display: flex; flex-direction: column; align-items: flex-end; line-height: 24px; letter-spacing: -.25px; }
```
